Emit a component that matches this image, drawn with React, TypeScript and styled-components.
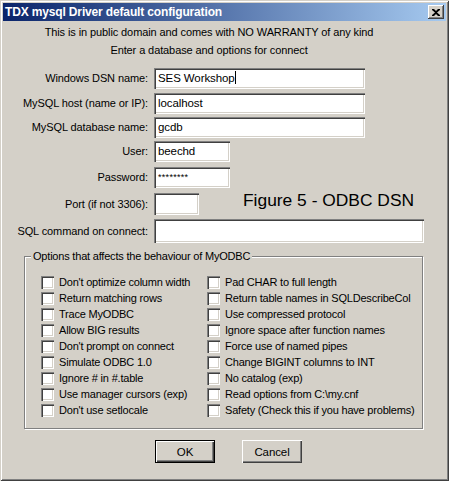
import React from 'react'
import styled, { createGlobalStyle } from 'styled-components'

const GlobalStyle = createGlobalStyle`
    body {
        margin: 0;
        background: #d4d0c8;
        font-family: "Liberation Sans", Arial, sans-serif;
    }
`

const Window = styled.div`
    box-sizing: border-box;
    width: 449px;
    height: 481px;
    padding: 3px;
    background: #d4d0c8;
    box-shadow: inset 1px 1px 0 #d4d0c8, inset -1px -1px 0 #404040,
        inset 2px 2px 0 #ffffff, inset -2px -2px 0 #808080;
    display: flex;
    flex-direction: column;
    font-size: 11px;
    letter-spacing: -0.1px;
    color: #000;
`

const TitleBar = styled.div`
    height: 18px;
    display: flex;
    align-items: center;
    justify-content: space-between;
    padding: 0 2px 0 2px;
    background: linear-gradient(to right, #0a246a, #a6caf0);
`

const Title = styled.span`
    color: #fff;
    font-weight: bold;
    font-size: 12px;
    letter-spacing: -0.15px;
`

const CloseButton = styled.div`
    box-sizing: border-box;
    width: 16px;
    height: 14px;
    background: #d4d0c8;
    box-shadow: inset -1px -1px 0 #404040, inset 1px 1px 0 #ffffff,
        inset -2px -2px 0 #808080;
    display: flex;
    align-items: center;
    justify-content: center;
`

const Intro = styled.div`
    padding-right: 31px;
    margin-top: 2px;
    text-align: center;
    line-height: 18px;
`

const Form = styled.div`
    display: grid;
    grid-template-columns: 145px auto;
    column-gap: 6px;
    margin-top: 9px;
`

const Label = styled.div<{ $top: number; $h: number }>`
    margin-top: ${p => p.$top}px;
    height: ${p => p.$h}px;
    line-height: ${p => p.$h}px;
    text-align: right;
    white-space: nowrap;
`

const FieldCell = styled.div<{ $top: number }>`
    margin-top: ${p => p.$top}px;
    display: flex;
    align-items: flex-start;
`

const TextBox = styled.div<{ $w: number; $h: number; $small?: boolean }>`
    box-sizing: border-box;
    width: ${p => p.$w}px;
    height: ${p => p.$h}px;
    background: #fff;
    padding: 0 4px;
    line-height: ${p => p.$h}px;
    font-size: ${p => (p.$small ? '9px' : '11.5px')};
    letter-spacing: ${p => (p.$small ? '0.3px' : '-0.1px')};
    box-shadow: inset 1px 1px 0 #808080, inset 2px 2px 0 #404040,
        inset -1px -1px 0 #ffffff, inset -2px -2px 0 #d4d0c8;
    white-space: nowrap;
    overflow: hidden;
`

const Caret = styled.span`
    display: inline-block;
    width: 1px;
    height: 13px;
    background: #000;
    vertical-align: -2px;
`

const Figure = styled.div`
    margin-left: 44px;
    margin-top: -3px;
    font-size: 17.4px;
    letter-spacing: 0;
    line-height: 20px;
    white-space: nowrap;
`

const Group = styled.div`
    position: relative;
    box-sizing: border-box;
    width: 399px;
    height: 173px;
    margin: 13px 0 0 21px;
    border: 1px solid #808080;
    box-shadow: 1px 1px 0 #ffffff, inset 1px 1px 0 #ffffff;
    padding: 17px 0 0 16px;
`

const Legend = styled.span`
    position: absolute;
    left: 6px;
    top: -8px;
    padding: 0 2px;
    line-height: 14px;
    font-size: 11px;
    letter-spacing: -0.2px;
    background: #d4d0c8;
`

const Options = styled.div`
    display: grid;
    grid-template-columns: 166px auto;
    grid-auto-flow: column;
    grid-template-rows: repeat(9, 16px);
`

const Option = styled.label`
    display: flex;
    align-items: center;
    height: 16px;
    gap: 5px;
    font-size: 11px;
    letter-spacing: -0.2px;
    white-space: nowrap;
`

const Box = styled.span`
    box-sizing: border-box;
    width: 13px;
    height: 13px;
    flex: none;
    background: #fff;
    box-shadow: inset 1px 1px 0 #808080, inset 2px 2px 0 #404040,
        inset -1px -1px 0 #ffffff, inset -2px -2px 0 #d4d0c8;
`

const Buttons = styled.div`
    display: flex;
    gap: 27px;
    margin: 11px 0 0 152px;
`

const Button = styled.div<{ $default?: boolean }>`
    box-sizing: border-box;
    width: 60px;
    height: 23px;
    display: flex;
    align-items: center;
    justify-content: center;
    font-size: 11.5px;
    background: #d4d0c8;
    border: ${p => (p.$default ? '1px solid #000' : 'none')};
    box-shadow: inset 1px 1px 0 #ffffff, inset -1px -1px 0 #404040,
        inset -2px -2px 0 #808080;
`

const fields = [
    { label: 'Windows DSN name:', top: 0, w: 211, h: 21, value: 'SES Workshop', caret: true },
    { label: 'MySQL host (name or IP):', top: 4, w: 211, h: 21, value: 'localhost' },
    { label: 'MySQL database name:', top: 3, w: 211, h: 21, value: 'gcdb' },
    { label: 'User:', top: 3, w: 76, h: 21, value: 'beechd' },
    { label: 'Password:', top: 5, w: 76, h: 21, value: '********', small: true },
    { label: 'Port (if not 3306):', top: 5, w: 45, h: 22, value: '', figure: true },
    { label: 'SQL command on connect:', top: 4, w: 270, h: 24, value: '' },
]

const leftOptions = [
    "Don't optimize column width",
    'Return matching rows',
    'Trace MyODBC',
    'Allow BIG results',
    "Don't prompt on connect",
    'Simulate ODBC 1.0',
    'Ignore # in #.table',
    'Use manager cursors (exp)',
    "Don't use setlocale",
]

const rightOptions = [
    'Pad CHAR to full length',
    'Return table names in SQLDescribeCol',
    'Use compressed protocol',
    'Ignore space after function names',
    'Force use of named pipes',
    'Change BIGINT columns to INT',
    'No catalog (exp)',
    'Read options from C:\\my.cnf',
    'Safety (Check this if you have problems)',
]

const App: React.FC = () => {
    return (
        <>
            <GlobalStyle />
            <Window>
                <TitleBar>
                    <Title>TDX mysql Driver default configuration</Title>
                    <CloseButton>
                        <svg width="8" height="7" viewBox="0 0 8 7">
                            <path d="M0 0h2l2 2 2-2h2v1L5 3.5 8 6v1H6L4 5 2 7H0V6l3-2.5L0 1z" fill="#000" />
                        </svg>
                    </CloseButton>
                </TitleBar>
                <Intro>
                    <div>This is in public domain and comes with NO WARRANTY of any kind</div>
                    <div>Enter a database and options for connect</div>
                </Intro>
                <Form>
                    {fields.map(f => (
                        <React.Fragment key={f.label}>
                            <Label $top={f.top} $h={f.h}>{f.label}</Label>
                            <FieldCell $top={f.top}>
                                <TextBox $w={f.w} $h={f.h} $small={f.small}>
                                    {f.value}
                                    {f.caret && <Caret />}
                                </TextBox>
                                {f.figure && <Figure>Figure 5 - ODBC DSN</Figure>}
                            </FieldCell>
                        </React.Fragment>
                    ))}
                </Form>
                <Group>
                    <Legend>Options that affects the behaviour of MyODBC</Legend>
                    <Options>
                        {[...leftOptions, ...rightOptions].map(o => (
                            <Option key={o}>
                                <Box />
                                {o}
                            </Option>
                        ))}
                    </Options>
                </Group>
                <Buttons>
                    <Button $default>OK</Button>
                    <Button>Cancel</Button>
                </Buttons>
            </Window>
        </>
    )
}

export default App
